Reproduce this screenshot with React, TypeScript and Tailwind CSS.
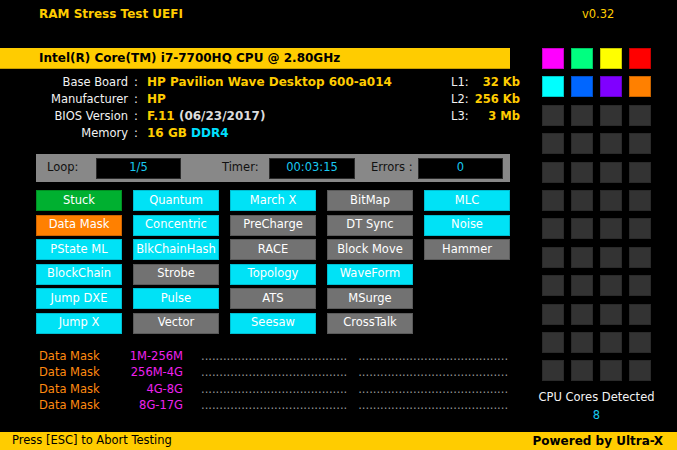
import React from "react";

type Tone = "cyan" | "gray" | "green" | "orange";

const TONES: Record<Tone, string> = {
  cyan: "bg-[#00e2f6] border-[#00bcd0]",
  gray: "bg-[#727272] border-[#5a5a5a]",
  green: "bg-[#00b030] border-[#008f22]",
  orange: "bg-[#ff8000] border-[#d06400]",
};

const TESTS: ([string, Tone] | null)[] = [
  ["Stuck", "green"], ["Quantum", "cyan"], ["March X", "cyan"], ["BitMap", "gray"], ["MLC", "cyan"],
  ["Data Mask", "orange"], ["Concentric", "cyan"], ["PreCharge", "gray"], ["DT Sync", "gray"], ["Noise", "cyan"],
  ["PState ML", "cyan"], ["BlkChainHash", "cyan"], ["RACE", "gray"], ["Block Move", "gray"], ["Hammer", "gray"],
  ["BlockChain", "cyan"], ["Strobe", "gray"], ["Topology", "cyan"], ["WaveForm", "cyan"], null,
  ["Jump DXE", "cyan"], ["Pulse", "cyan"], ["ATS", "gray"], ["MSurge", "gray"], null,
  ["Jump X", "cyan"], ["Vector", "gray"], ["Seesaw", "cyan"], ["CrossTalk", "gray"], null,
];

const CORE_COLORS = [
  "bg-[#ff00ff] border-[#c800c8]",
  "bg-[#00ff80] border-[#00c864]",
  "bg-[#ffff00] border-[#c8c800]",
  "bg-[#ff0000] border-[#c80000]",
  "bg-[#00ffff] border-[#00c8c8]",
  "bg-[#0066ff] border-[#0050c8]",
  "bg-[#8000ff] border-[#6400c8]",
  "bg-[#ff8000] border-[#c86400]",
];

const LOG = ["1M-256M", "256M-4G", "4G-8G", "8G-17G"];

// progress trail: dots, a short break, more dots
const TRAIL = ".".repeat(40) + "   " + ".".repeat(41);

function StatusBox({ value }: { value: string }) {
  return (
    <div className="flex h-[21px] items-center justify-center border border-[#2a2a2a] bg-black text-[#18c8f0]">
      {value}
    </div>
  );
}

export default function App() {
  return (
    <div className="flex h-[450px] w-[677px] flex-col overflow-hidden bg-black font-['DejaVu_Sans',sans-serif] text-[11.5px] text-[#f2f2f2]">
      <div className="flex h-[48px] shrink-0 items-start pt-[6px] leading-[17px] text-[#ffcc00]">
        <div className="w-[582px] pl-[39px] text-[12px] font-bold">RAM Stress Test UEFI</div>
        <div>v0.32</div>
      </div>

      <div className="flex flex-1">
        <div className="w-[520px] shrink-0">
          <div className="h-[21px] w-[510px] border-b border-[#c89e00] bg-[#ffcc00] pl-[39px] text-[12px] font-bold leading-[21px] text-black">
            Intel(R) Core(TM) i7-7700HQ CPU @ 2.80GHz
          </div>

          <div className="mt-[4.5px] flex leading-[17px]">
            <div className="w-[451px]">
              {[
                ["Base Board", <span className="text-[#ffcc00]">HP Pavilion Wave Desktop 600-a014</span>],
                ["Manufacturer", <span className="text-[#ffcc00]">HP</span>],
                ["BIOS Version", <><span className="text-[#ffcc00]">F.11</span> <span className="text-[#dcdcdc]">(06/23/2017)</span></>],
                ["Memory", <><span className="text-[#ffcc00]">16 GB</span> <span className="text-[#00e0ff]">DDR4</span></>],
              ].map(([label, value], i) => (
                <div key={i} className="flex">
                  <span className="w-[128px] text-right">{label}</span>
                  <span className="w-[19px] pl-[6px]">:</span>
                  <span className="text-[12px] font-bold">{value}</span>
                </div>
              ))}
            </div>
            <div className="w-[69px]">
              {[["L1:", "32 Kb"], ["L2:", "256 Kb"], ["L3:", "3 Mb"]].map(([l, v]) => (
                <div key={l} className="flex whitespace-nowrap">
                  <span className="w-[21px]">{l}</span>
                  <span className="flex-1 text-right text-[11.5px] font-bold text-[#ffcc00]">{v}</span>
                </div>
              ))}
            </div>
          </div>

          <div className="ml-[36px] mt-[12.5px] flex h-[28px] w-[474px] items-center bg-[#888888] pl-[11px] text-[#111]">
            <span className="w-[49px]">Loop:</span>
            <div className="w-[85px]"><StatusBox value="1/5" /></div>
            <span className="ml-[41px] w-[47px]">Timer:</span>
            <div className="w-[86px]"><StatusBox value="00:03:15" /></div>
            <span className="ml-[16px] w-[47px]">Errors :</span>
            <div className="w-[85px]"><StatusBox value="0" /></div>
          </div>

          <div className="ml-[36px] mt-[8px] grid w-[474px] grid-cols-5 gap-x-[11px] gap-y-[3.5px]">
            {TESTS.map((t, i) =>
              t ? (
                <div
                  key={i}
                  className={`flex h-[21px] items-center justify-center border text-white ${TONES[t[1]]}`}
                >
                  {t[0]}
                </div>
              ) : (
                <div key={i} className="h-[21px]" />
              )
            )}
          </div>

          <div className="mt-[14px] leading-[16.5px]">
            {LOG.map((range) => (
              <div key={range} className="flex whitespace-pre">
                <span className="w-[120px] pl-[39px] text-[#ff8a10]">Data Mask</span>
                <span className="w-[63px] text-right text-[#ee22ee]">{range}</span>
                <span className="ml-[18px] text-[#9a9a9a]">{TRAIL}</span>
              </div>
            ))}
          </div>
        </div>

        <div className="flex w-[157px] flex-col pl-[22px]">
          <div className="grid grid-cols-[repeat(4,22px)] gap-x-[7px] gap-y-[7.4px]">
            {Array.from({ length: 48 }).map((_, i) => (
              <div
                key={i}
                className={`h-[21px] border ${CORE_COLORS[i] ?? "bg-[#333333] border-[#2a2a2a]"}`}
              />
            ))}
          </div>
          <div className="mt-[8px] w-[109px] whitespace-nowrap text-center leading-[16px]">
            <div className="-mx-[10px]">CPU Cores Detected</div>
            <div className="mt-[2px] text-[#18c8f0]">8</div>
          </div>
        </div>
      </div>

      <div className="flex h-[18px] shrink-0 items-center justify-between bg-[#ffcc00] pl-[12px] pr-[14px] text-black">
        <span>Press [ESC] to Abort Testing</span>
        <span className="text-[12px] font-bold">Powered by Ultra-X</span>
      </div>
    </div>
  );
}
